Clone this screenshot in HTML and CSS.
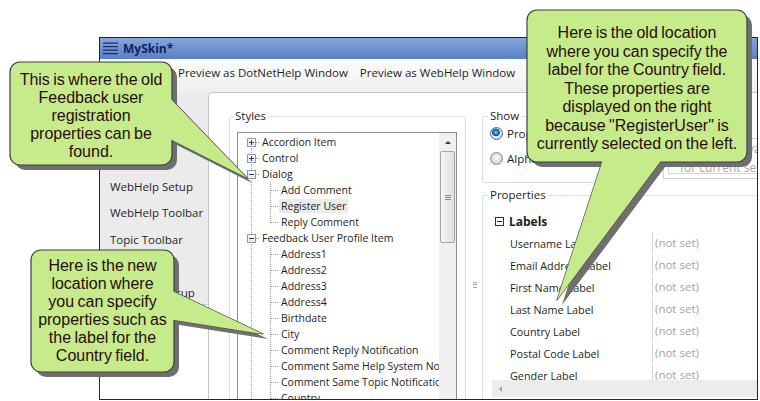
FILE: index.html
```html
<!DOCTYPE html>
<html>
<head>
<meta charset="utf-8">
<link rel="stylesheet" href="styles.css">
</head>
<body>
<div class="page">
  <div class="window">
    <div class="titlebar">
      <svg class="menu-icon" width="15" height="13" viewBox="0 0 15 13">
        <rect x="0" y="0.5" width="15" height="1.2" fill="#1b2a5c"/>
        <rect x="0" y="4" width="15" height="1.2" fill="#1b2a5c"/>
        <rect x="0" y="7.5" width="15" height="1.2" fill="#1b2a5c"/>
        <rect x="0" y="11" width="15" height="1.2" fill="#1b2a5c"/>
      </svg>
      <span class="title">MySkin*</span>
    </div>
    <div class="toolbar">
      <span class="tb-item">Preview as DotNetHelp Window</span>
      <span class="tb-item">Preview as WebHelp Window</span>
      <span class="tb-sep"></span>
    </div>
    <div class="body">
      <div class="nav">
        <div class="navlist">
          <div class="navitem"></div>
          <div class="navitem"></div>
          <div class="navitem"></div>
          <div class="navitem">WebHelp Setup</div>
          <div class="navitem">WebHelp Toolbar</div>
          <div class="navitem">Topic Toolbar</div>
          <div class="navitem"></div>
          <div class="navitem">Feedback Setup</div>
        </div>
      </div>
      <div class="panel">
        <fieldset class="group styles">
          <legend>Styles</legend>
          <div class="listbox">
            <div class="tree">
              <div class="row"><span class="ga root first"><i class="exp plus"></i></span><span class="lbl">Accordion Item</span></div>
              <div class="row"><span class="ga root"><i class="exp plus"></i></span><span class="lbl">Control</span></div>
              <div class="row"><span class="ga root"><i class="exp minus"></i></span><span class="lbl">Dialog</span></div>
              <div class="row"><span class="ga"></span><span class="gb"></span><span class="lbl">Add Comment</span></div>
              <div class="row sel"><span class="ga"></span><span class="gb"></span><span class="lbl">Register User</span></div>
              <div class="row"><span class="ga"></span><span class="gb last"></span><span class="lbl">Reply Comment</span></div>
              <div class="row"><span class="ga root"><i class="exp minus"></i></span><span class="lbl">Feedback User Profile Item</span></div>
              <div class="row"><span class="ga"></span><span class="gb"></span><span class="lbl">Address1</span></div>
              <div class="row"><span class="ga"></span><span class="gb"></span><span class="lbl">Address2</span></div>
              <div class="row"><span class="ga"></span><span class="gb"></span><span class="lbl">Address3</span></div>
              <div class="row"><span class="ga"></span><span class="gb"></span><span class="lbl">Address4</span></div>
              <div class="row"><span class="ga"></span><span class="gb"></span><span class="lbl">Birthdate</span></div>
              <div class="row"><span class="ga"></span><span class="gb"></span><span class="lbl">City</span></div>
              <div class="row"><span class="ga"></span><span class="gb"></span><span class="lbl">Comment Reply Notification</span></div>
              <div class="row"><span class="ga"></span><span class="gb"></span><span class="lbl">Comment Same Help System Notification</span></div>
              <div class="row"><span class="ga"></span><span class="gb"></span><span class="lbl">Comment Same Topic Notification</span></div>
              <div class="row"><span class="ga"></span><span class="gb"></span><span class="lbl">Country</span></div>
              <div class="row"><span class="ga"></span><span class="gb"></span><span class="lbl">Email Address</span></div>
            </div>
            <div class="vscroll">
              <div class="sb-btn"><i class="arrow-up"></i></div>
              <div class="sb-thumb"><i class="grip-h"></i></div>
            </div>
          </div>
        </fieldset>
        <div class="splitter"><i class="grip-h small"></i></div>
        <div class="right">
          <div class="toprow">
            <fieldset class="group show">
              <legend>Show</legend>
              <div class="radio-row"><i class="radio on"></i><span>Properties by Category</span></div>
              <div class="radio-row"><i class="radio"></i><span>Alphabetical List</span></div>
            </fieldset>
            <div class="desc">
              <div class="desc-inner">Properties available<br>for current selection</div>
            </div>
          </div>
          <fieldset class="group props">
            <legend>Properties</legend>
            <div class="grid">
              <div class="cat"><i class="exp minus dark"></i><span>Labels</span></div>
              <div class="prow"><span class="pname">Username Label</span><span class="pval">(not set)</span></div>
              <div class="prow"><span class="pname">Email Address Label</span><span class="pval">(not set)</span></div>
              <div class="prow"><span class="pname">First Name Label</span><span class="pval">(not set)</span></div>
              <div class="prow"><span class="pname">Last Name Label</span><span class="pval">(not set)</span></div>
              <div class="prow"><span class="pname">Country Label</span><span class="pval">(not set)</span></div>
              <div class="prow"><span class="pname">Postal Code Label</span><span class="pval">(not set)</span></div>
              <div class="prow"><span class="pname">Gender Label</span><span class="pval">(not set)</span></div>
              <div class="prow"><span class="pname">Birthdate Label</span><span class="pval">(not set)</span></div>
            </div>
            <div class="hscroll"><i class="arrow-left"></i></div>
          </fieldset>
        </div>
      </div>
    </div>
  </div>

  <svg class="callouts" width="760" height="401" viewBox="0 0 760 401">
    <g fill="#6f6f6f">
      <rect x="15" y="67" width="162" height="103" rx="10"/>
      <polygon points="171,99 171,142 252,183"/>
      <rect x="36" y="255" width="143" height="122" rx="10"/>
      <polygon points="173,294 173,324 268,339"/>
      <rect x="532" y="15" width="220" height="152" rx="10"/>
      <polygon points="609,161 669.5,161 562,305"/>
    </g>
    <g fill="#c5eb8b" stroke="#404040" stroke-width="1.2" stroke-linejoin="round">
      <polygon points="166,94 166,137 247,178"/>
      <rect x="10" y="62" width="162" height="103" rx="10"/>
      <polygon points="166,94 166,137 247,178" stroke="none"/>

      <polygon points="168,289 168,319 263,334"/>
      <rect x="31" y="250" width="143" height="122" rx="10"/>
      <polygon points="168,289 168,319 263,334" stroke="none"/>

      <polygon points="604,156 664.5,156 557,300"/>
      <rect x="527" y="10" width="220" height="152" rx="10"/>
      <polygon points="604,156 664.5,156 557,300" stroke="none"/>
    </g>
  </svg>
  <div class="ct c1">This is where the old<br>Feedback user<br>registration<br>properties can be<br>found.</div>
  <div class="ct c2">Here is the new<br>location where<br>you can specify<br>properties such as<br>the label for the<br>Country field.</div>
  <div class="ct c3">Here is the old location<br>where you can specify the<br>label for the Country field.<br>These properties are<br>displayed on the right<br>because "RegisterUser" is<br>currently selected on the left.</div>
</div>
</body>
</html>
```

FILE: styles.css
```css
* { box-sizing: border-box; }
html, body { margin: 0; padding: 0; background: #fff; }
body {
  font-family: "Open Sans", "Liberation Sans", sans-serif;
  font-size: 11px;
  color: #1e1e1e;
}
.page { position: relative; width: 760px; height: 401px; overflow: hidden; }

.window {
  margin: 37px 0 0 99px;
  width: 659px;
  height: 363px;
  border: 1px solid #262626;
  display: flex;
  flex-direction: column;
  overflow: hidden;
}
.titlebar {
  height: 21px;
  flex: none;
  background: linear-gradient(#86a6db, #5680c6);
  display: flex;
  align-items: center;
  padding-left: 3px;
  gap: 5px;
}
.menu-icon { display: block; }
.title { font-weight: 700; font-size: 12px; color: #13235c; }

.toolbar {
  height: 33px;
  flex: none;
  background: linear-gradient(#fdfdfd, #efefef);
  display: flex;
  align-items: flex-start;
  padding: 6px 0 0 78px;
  gap: 12px;
  font-size: 11.5px;
  line-height: 16px;
}
.tb-sep { width: 1px; height: 15px; background: #8a8a8a; margin-top: 1px; }

.body { flex: 1; display: flex; min-height: 0; background: #f0f0f0; }
.nav { width: 108px; flex: none; background: #fff; }
.navlist {
  height: 213px;
  background: #ebebeb;
  border-bottom: 1px solid #cdcdcd;
  padding-top: 2px;
  overflow: hidden;
}
.navitem { height: 26.5px; line-height: 26.5px; padding-left: 10px; font-size: 11.5px; white-space: nowrap; }

.panel {
  flex: 1;
  min-width: 0;
  background: #fff;
  border-left: 1px solid #c4c4c4;
  border-top: 1px solid #c4c4c4;
  border-top-left-radius: 5px;
  display: flex;
  align-items: flex-start;
  padding: 16px 0 0 20px;
  overflow: hidden;
}

.group {
  margin: 0;
  padding: 0;
  border: 1px solid #d5dfe5;
  border-radius: 3px;
  min-width: 0;
}
.group legend { padding: 0 2px; font-size: 11.5px; line-height: 14px; }

.styles { width: 237px; height: 300px; flex: none; }
.styles legend { margin-left: 3px; }
.listbox {
  margin: 9px 8px 0 7px;
  height: 280px;
  border: 1px solid #8c8e90;
  display: flex;
}
.tree { flex: 1; min-width: 0; overflow: hidden; padding-top: 1px; font-size: 10.5px; }
.row { display: flex; height: 16px; align-items: center; white-space: nowrap; }
.lbl { padding: 0 2px; line-height: 14px; }
.row.sel .lbl { background: #ebebeb; }

.ga {
  width: 22px; height: 16px; flex: none;
  display: flex; align-items: center;
  background: repeating-linear-gradient(to bottom, #9a9a9a 0 1px, transparent 1px 2px) 13px 0 / 1px 16px no-repeat;
}
.ga.root {
  background:
    repeating-linear-gradient(to right, #9a9a9a 0 1px, transparent 1px 2px) 18px 8px / 4px 1px no-repeat,
    repeating-linear-gradient(to bottom, #9a9a9a 0 1px, transparent 1px 2px) 13px 0 / 1px 16px no-repeat;
}
.ga.root.first {
  background:
    repeating-linear-gradient(to right, #9a9a9a 0 1px, transparent 1px 2px) 18px 8px / 4px 1px no-repeat,
    repeating-linear-gradient(to bottom, #9a9a9a 0 1px, transparent 1px 2px) 13px 8px / 1px 8px no-repeat;
}
.gb {
  width: 19px; height: 16px; flex: none;
  background:
    repeating-linear-gradient(to right, #9a9a9a 0 1px, transparent 1px 2px) 11px 8px / 8px 1px no-repeat,
    repeating-linear-gradient(to bottom, #9a9a9a 0 1px, transparent 1px 2px) 10px 0 / 1px 16px no-repeat;
}
.gb.last {
  background:
    repeating-linear-gradient(to right, #9a9a9a 0 1px, transparent 1px 2px) 11px 8px / 8px 1px no-repeat,
    repeating-linear-gradient(to bottom, #9a9a9a 0 1px, transparent 1px 2px) 10px 0 / 1px 9px no-repeat;
}
.exp {
  display: block;
  width: 9px; height: 9px;
  margin-left: 9px;
  border: 1px solid #8e9aa8;
  background-color: #fff;
}
.exp.minus {
  background: linear-gradient(#2a3f66, #2a3f66) center / 5px 1px no-repeat, linear-gradient(#ffffff, #e6e6e6);
}
.exp.plus {
  background:
    linear-gradient(#2a3f66, #2a3f66) center / 5px 1px no-repeat,
    linear-gradient(#2a3f66, #2a3f66) center / 1px 5px no-repeat,
    linear-gradient(#ffffff, #e6e6e6);
}

.vscroll { width: 17px; flex: none; background: #f0f0f0; display: flex; flex-direction: column; align-items: center; }
.sb-btn { height: 18px; width: 17px; display: flex; align-items: center; justify-content: center; }
.arrow-up { width: 0; height: 0; border-left: 3px solid transparent; border-right: 3px solid transparent; border-bottom: 3px solid #333; }
.sb-thumb {
  width: 15px; height: 92px;
  border: 1px solid #a4a4a4; border-radius: 2px;
  background: linear-gradient(to right, #f5f5f5, #e0e0e0);
  display: flex; align-items: center; justify-content: center;
}
.grip-h {
  display: block; width: 6px; height: 5px;
  background: repeating-linear-gradient(to bottom, #8a8a8a 0 1px, transparent 1px 2px);
}
.grip-h.small { width: 4px; background: repeating-linear-gradient(to bottom, #a8a8a8 0 1px, transparent 1px 2.5px); height: 6px; }

.splitter { width: 16px; flex: none; display: flex; justify-content: center; padding-top: 173px; padding-left: 2px; }

.right { flex: 1; min-width: 0; display: flex; flex-direction: column; }
.toprow { display: flex; height: 79px; flex: none; }
.show { width: 171px; height: 74px; flex: none; }
.show legend { margin-left: 5px; }
.radio-row { display: flex; align-items: center; height: 16px; padding-left: 7px; gap: 4px; white-space: nowrap; font-size: 11.5px; }
.radio-row + .radio-row { margin-top: 9px; }
.show .radio-row:first-of-type { margin-top: 2px; }
.radio {
  display: block; width: 13px; height: 13px; border-radius: 50%;
  border: 1px solid #8b8b8b;
  background: radial-gradient(circle at 50% 45%, #ffffff 0, #e8e8e8 3px, #cfcfcf 6px);
}
.radio.on {
  border-color: #3c6a94;
  background: radial-gradient(circle at 45% 40%, #8fd0ff 0, #2a7fd0 2px, #0d4d93 3.5px, #e6eef6 4.2px, #d2dce8 6px);
}
.desc {
  margin: 29px 0 0 10px;
  height: 41px;
  flex: 1;
  border: 1px solid #d0d0d0;
  border-right: none;
  padding: 0 0 4px 4px;
}
.desc-inner {
  height: 100%;
  border: 1px solid #d6d6d6;
  border-right: none;
  border-top: none;
  padding: 0 0 0 11px;
  font-size: 12px;
  line-height: 19px;
  color: #a6a6a6;
  white-space: nowrap;
  overflow: hidden;
}

.props { margin-top: 0; height: 230px; border-right: none; }
.props legend { margin-left: 5px; }
.grid { margin: 8px 0 0 9px; height: 170px; overflow: hidden; }
.cat { display: flex; align-items: center; height: 22px; font-weight: 700; font-size: 12px; }
.exp.dark { margin-left: 3px; margin-right: 5px; border-color: #303030; background: linear-gradient(#202020, #202020) center / 5px 1px no-repeat, #fff; }
.prow { display: flex; height: 22px; align-items: center; font-size: 10.8px; white-space: nowrap; }
.pname { width: 160px; flex: none; padding-left: 18px; }
.pval { height: 20px; line-height: 20px; border-left: 1px solid #d4d4d4; padding-left: 2px; color: #a3a3a3; font-size: 11.5px; }
.hscroll { margin-left: 9px; height: 17px; background: #ececec; display: flex; align-items: center; padding-left: 7px; }
.arrow-left { width: 0; height: 0; border-top: 3px solid transparent; border-bottom: 3px solid transparent; border-right: 3px solid #a0a0a0; }

.callouts { position: absolute; left: 0; top: 0; pointer-events: none; }
.ct {
  position: absolute;
  text-align: center;
  font-family: "Liberation Sans", Arial, sans-serif;
  font-size: 16px;
  line-height: 18px;
  color: #2a0c0c;
  word-spacing: -1px;
  white-space: nowrap;
}
.c1 { left: 10px; top: 62px; width: 162px; padding-top: 9px; }
.c2 { left: 31px; top: 250px; width: 143px; padding-top: 7px; }
.c3 { left: 527px; top: 10px; width: 220px; padding-top: 14px; line-height: 18.5px; }
```
